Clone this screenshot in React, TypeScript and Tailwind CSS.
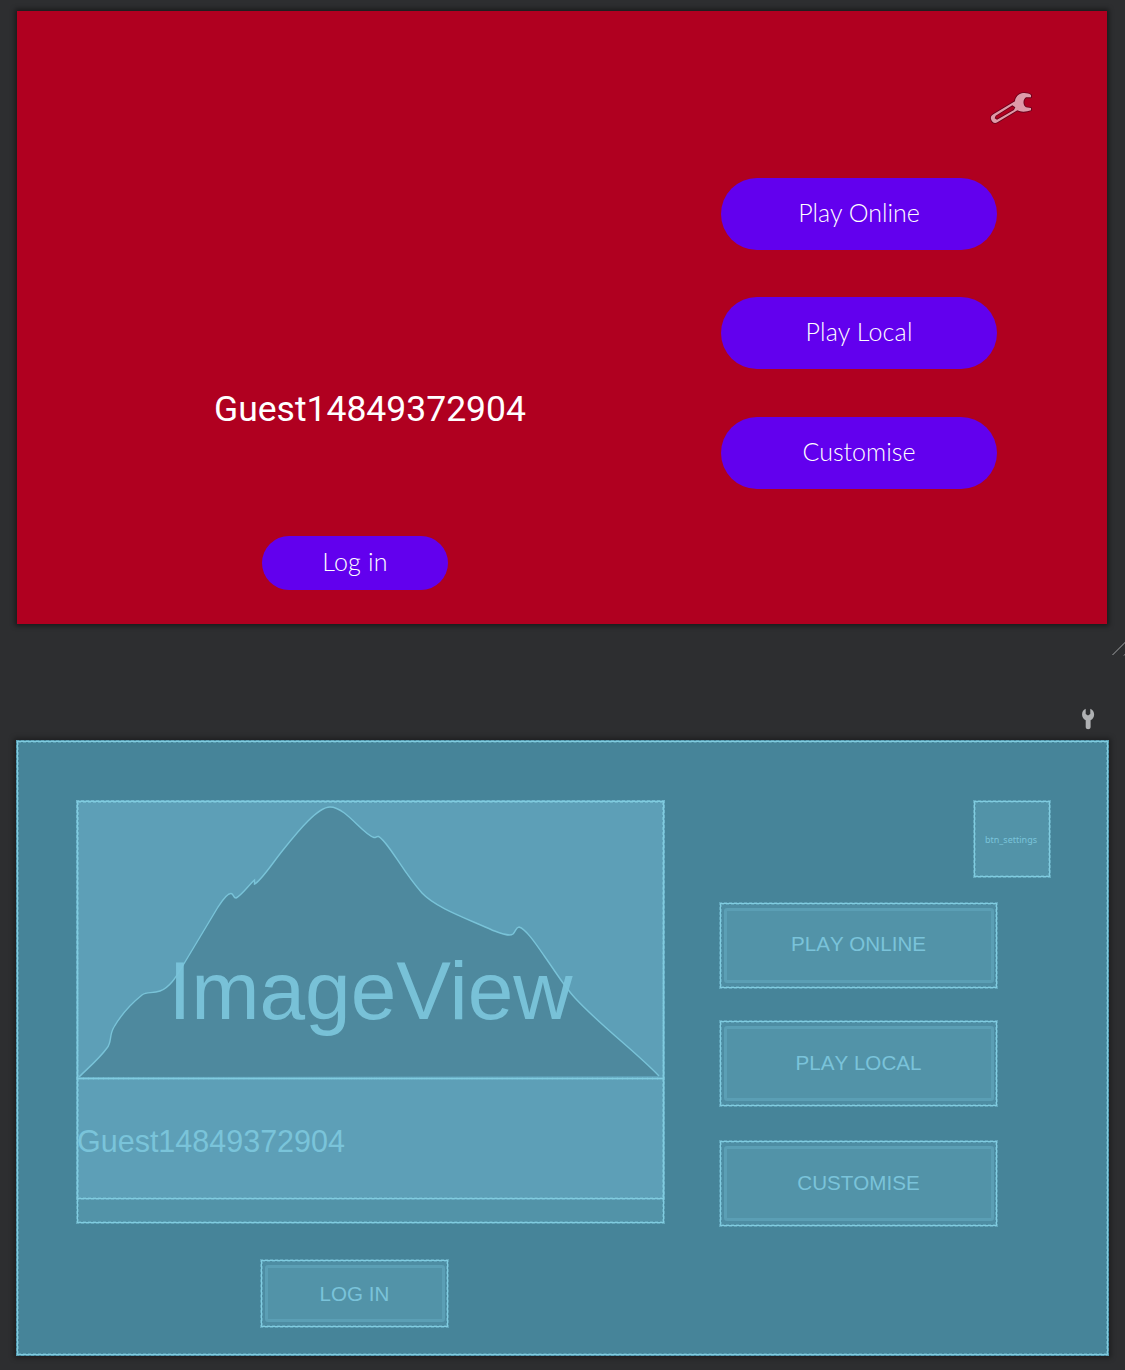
import React from "react";

const SCRIPT = "font-['Coming_Soon','Lato',sans-serif] font-light";

/* Purple pill shaped button of the design preview */
function Pill({ label, size, text }: { label: string; size: string; text: string }) {
  return (
    <button className={`flex items-center justify-center rounded-full bg-[#6200ee] pb-[3px] text-white ${size}`}>
      <span className={`whitespace-nowrap ${SCRIPT} ${text}`}>{label}</span>
    </button>
  );
}

/* Solid line with dashed edges on both sides, laid over the bounds of a view */
function Bounds() {
  return (
    <div className="pointer-events-none absolute inset-0 border border-dashed border-[#7ac4d8]/45">
      <div className="h-full w-full border border-[#80cce0]">
        <div className="h-full w-full border border-dashed border-[#7ac4d8]/45" />
      </div>
    </div>
  );
}

function BlueButton({ label, size, inner }: { label: string; size: string; inner: string }) {
  return (
    <div className={`relative bg-[#4e8da3] pt-1.5 pr-1 pb-1.5 pl-[5px] ${size}`}>
      <div
        className={`flex h-full w-full items-center justify-center rounded-[3px] border-[3px] border-[#5b9fb5] bg-[#5293a8] pr-px text-[20.6px] leading-6 text-[#7ac3da] [font-kerning:none] ${inner}`}
      >
        {label}
      </div>
      <Bounds />
    </div>
  );
}

function SettingsWrench() {
  return (
    <svg className="h-10 w-[52px]" viewBox="75 54 156 120">
      <path
        d="M213 75V82H198C188 88 188 106 198 112L213 114V121C200 126 182 127 172 121L112 157C103 162 95 156 93 147C91 141 95 136 100 133L165 94C165 85 172 73 185 70C196 68 206 70 213 75ZM107 137L104 145L111 149L162 120L166 112L157 106Z"
        fill="#df9aa8"
        fillRule="evenodd"
        stroke="#68001a"
        strokeWidth="5"
        strokeLinejoin="round"
        paintOrder="stroke"
      />
    </svg>
  );
}

function DesignPreview() {
  return (
    <section className="flex h-[613px] w-[1090px] bg-[#b00020] shadow-[0_0_5px_2px_rgba(0,0,0,0.45)]">
      <div className="flex w-[704px] flex-col">
        <div className="mt-[376px] pl-[197px] font-['Roboto'] text-[35.5px] leading-[44px] text-white">
          Guest14849372904
        </div>
        <div className="mt-[105px] pl-[245px]">
          <Pill label="Log in" size="h-[54px] w-[186px]" text="text-[25px] tracking-[0.2px]" />
        </div>
      </div>
      <div className="flex w-[276px] flex-col">
        <div className="mt-[77px] -mr-10 flex justify-end">
          <SettingsWrench />
        </div>
        <div className="mt-[50px] flex flex-col gap-[47.4px]">
          <Pill label="Play Online" size="h-[72px] w-[276px]" text="text-[25px]" />
          <Pill label="Play Local" size="h-[72px] w-[276px]" text="text-[25px] tracking-[0.2px]" />
          <Pill label="Customise" size="h-[72px] w-[276px]" text="text-[25px]" />
        </div>
      </div>
    </section>
  );
}

function Toolbar() {
  return (
    <div className="flex h-[116px] flex-col items-end pt-[18px]">
      <svg className="h-[14px] w-[14px]" viewBox="1111 642 14 14" fill="none" stroke="#a0a1a3">
        <path d="M1112.500 655L1125.500 642M1124 655.500L1126 653.500" />
      </svg>
      <svg className="mt-[52px] mr-[30px] h-[22px] w-[14px]" viewBox="0 0 14 22">
        <path
          d="M4.7 .8V6L7 7.600L9.300 6V.8C14.200 2.500 14.500 10 9.600 12.200V19C9.600 22 4.700 22 4.700 19V12.200C-.3 10 0 2.500 4.700 .8Z"
          fill="#afb1b3"
        />
      </svg>
    </div>
  );
}

function ImagePlaceholder() {
  return (
    <div className="relative flex h-[280px] items-center justify-center bg-[#5d9fb7]">
      <svg className="absolute inset-0 h-full w-full" viewBox="76 800 589 280">
        <path
          d="M79 1077C88 1068 99 1059 107 1048C112 1042 109 1035 114 1027C121 1015 132 1003 142 995C147 991 152 994 160 991C171 987 177 975 185 962L218 907C222 901 227 893 231 893.500C234 894 233 898 236 898C241 896 248 886 254.500 880V884C261 881 271 865 283 850C299 830 318 807 330 807C346 807 363 835 374 837.500C376 838 376 836 378.500 836.500C388 841 402 871 422 893C436 908 468 919 492 930C500 933 509 937 513 934C516 931 516 927 519 927C526 929 536 944 545 957C557 974 564 986 575 998C602 1027 635 1051 659 1076"
          fill="#4e899e"
          stroke="#79c3d8"
          strokeWidth="1.4"
        />
      </svg>
      <span className="relative mt-[102px] text-[82px] leading-[94px] text-[#7ac4da]/95">ImageView</span>
      <Bounds />
    </div>
  );
}

function Blueprint() {
  return (
    <section className="relative -ml-px flex h-[616px] w-[1093px] bg-[#468499] font-['Liberation_Sans',Arial,sans-serif] shadow-[0_0_5px_2px_rgba(0,0,0,0.35)]">
      <div className="flex w-[703px] flex-col pt-[60px] pl-[60px]">
        <div className="relative h-[424px] w-[589px] bg-[#5293a8]">
          <ImagePlaceholder />
          <div className="relative -mt-[3px] flex h-[123px] items-center pt-[5px] pl-px text-[30.5px] leading-9 text-[#7ac4da]">
            <div className="absolute inset-x-0 top-[3px] bottom-0 bg-[#5d9fb7]" />
            <span className="relative">Guest14849372904</span>
            <Bounds />
          </div>
          <Bounds />
        </div>
        <div className="mt-[35px] pl-[184px]">
          <BlueButton label="LOG IN" size="h-[69px] w-[189px]" inner="pb-0" />
        </div>
      </div>
      <div className="flex w-[279px] flex-col pt-[60px]">
        <div className="-mr-[53px] flex justify-end">
          <div className="relative flex h-[78px] w-[78px] items-center justify-center bg-[#5293a8] pt-0.5 pr-0.5 font-['Noto_Sans','Open_Sans',sans-serif] text-[9px] text-[#7ac4da]">
            btn_settings
            <Bounds />
          </div>
        </div>
        <div className="mt-6 flex flex-col">
          <BlueButton label="PLAY ONLINE" size="h-[87px] w-[279px]" inner="pb-[3px]" />
          <BlueButton label="PLAY LOCAL" size="mt-[31px] h-[87px] w-[279px]" inner="pb-px" />
          <BlueButton label="CUSTOMISE" size="mt-[33px] h-[87px] w-[279px]" inner="pb-px" />
        </div>
      </div>
      <Bounds />
    </section>
  );
}

export default function App() {
  return (
    <main className="h-[1370px] w-[1125px] overflow-hidden bg-[#2d2e30] pt-[11px] pl-[17px]">
      <DesignPreview />
      <Toolbar />
      <Blueprint />
    </main>
  );
}
